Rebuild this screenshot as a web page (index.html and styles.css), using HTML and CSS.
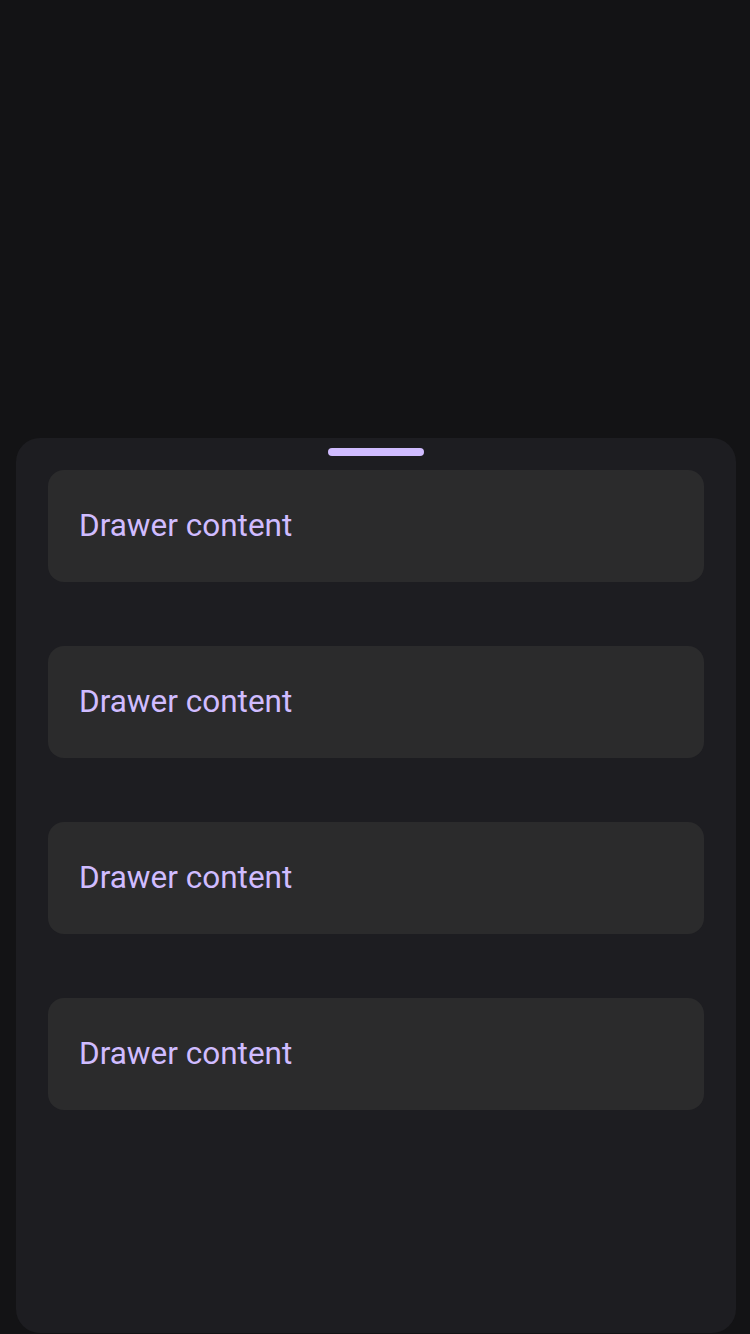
FILE: index.html
```html
<!DOCTYPE html>
<html>
<head>
<meta charset="utf-8">
<link rel="stylesheet" href="styles.css">
</head>
<body>
<div class="screen">
  <div class="backdrop"></div>
  <div class="drawer">
    <div class="handle"></div>
    <div class="list">
      <div class="card"><span class="label">Drawer content</span></div>
      <div class="card"><span class="label">Drawer content</span></div>
      <div class="card"><span class="label">Drawer content</span></div>
      <div class="card"><span class="label">Drawer content</span></div>
    </div>
  </div>
</div>
</body>
</html>
```
FILE: styles.css
```css
html, body {
  margin: 0;
  padding: 0;
  background: #131315;
}
.screen {
  width: 750px;
  height: 1334px;
  display: flex;
  flex-direction: column;
  overflow: hidden;
}
.backdrop {
  height: 438px;
  flex: none;
}
.drawer {
  margin: 0 14px 1px 16px;
  height: 895px;
  background: #1d1d21;
  border-radius: 24px;
  padding: 10px 32px 0;
  box-sizing: border-box;
  display: flex;
  flex-direction: column;
}
.handle {
  width: 96px;
  height: 8px;
  border-radius: 4px;
  background: #d0bcff;
  align-self: center;
}
.list {
  margin-top: 14px;
  display: flex;
  flex-direction: column;
  gap: 64px;
}
.card {
  height: 112px;
  background: #2b2b2c;
  border-radius: 16px;
  padding: 0 31px;
  box-sizing: border-box;
  display: flex;
  align-items: center;
  font-family: Roboto, "Liberation Sans", sans-serif;
  font-size: 31.5px;
  line-height: 40px;
  color: #d0bcff;
}
```
